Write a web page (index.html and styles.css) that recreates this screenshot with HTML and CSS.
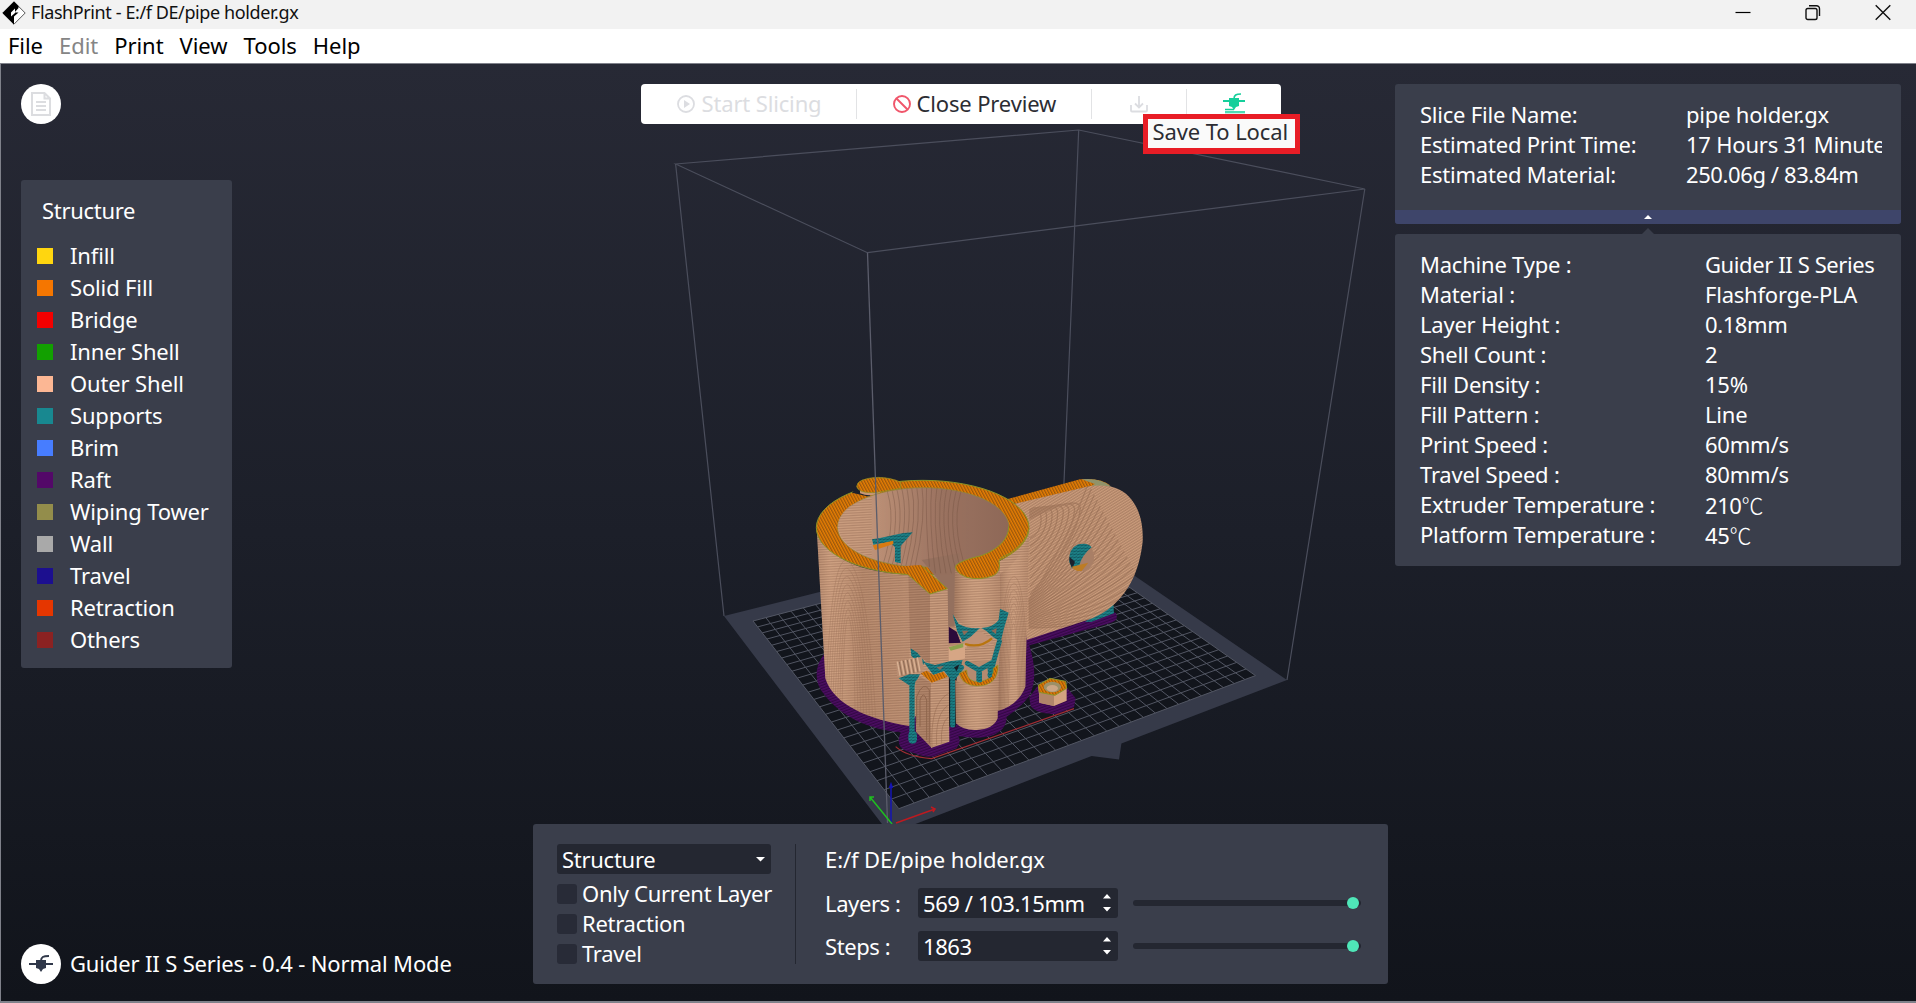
FILE: index.html
```html
<!DOCTYPE html>
<html lang="en">
<head>
<meta charset="utf-8">
<title>FlashPrint - E:/f DE/pipe holder.gx</title>
<link rel="stylesheet" href="styles.css">
</head>
<body>
<header class="titlebar">
  <svg class="logo" width="24" height="24" viewBox="0 0 24 24"><path d="M12 .8 23.2 12 12 23.2.8 12z" fill="#fff" stroke="#555" stroke-width="1"/><path d="M12 .5.5 12 12 23.5V15.5l4.5-4H12.500l4-4.500V5z" fill="#000"/><path d="M9 11.500 13 7.500v4.500l-4 3.500z" fill="#fff"/></svg>
  <span class="title">FlashPrint - E:/f DE/pipe holder.gx</span>
  <div class="controls">
    <svg width="16" height="18" viewBox="0 0 16 18"><path d="M.5 8.500h15" stroke="#000" stroke-width="1.200"/></svg>
    <svg width="16" height="18" viewBox="0 0 16 18" fill="none" stroke="#111" stroke-width="1.400"><rect x="1" y="4.500" width="11" height="11" rx="1.800"/><path d="M4 1.700h7.500a3 3 0 0 1 3 3V12"/></svg>
    <svg width="16" height="18" viewBox="0 0 16 18"><path d="M.7 1.200l14.600 14.600M15.300 1.200.7 15.800" stroke="#111" stroke-width="1.400"/></svg>
  </div>
</header>
<nav class="menubar"><span>File</span><span class="disabled">Edit</span><span>Print</span><span>View</span><span>Tools</span><span>Help</span></nav>

<main class="viewport">
<svg class="scene" viewBox="1 64 1915 937" width="1915" height="937">
  <defs>
    <pattern id="layers" width="6" height="5" patternUnits="userSpaceOnUse" patternTransform="rotate(2)"><rect width="6" height="5" fill="#cc9f80"/><path d="M0 4H6" stroke="#987058" stroke-width="2"/></pattern>
    <pattern id="fan" width="7" height="7" patternUnits="userSpaceOnUse" patternTransform="rotate(-32)"><rect width="7" height="7" fill="#cb9d7d"/><path d="M0 5H7" stroke="#a0765c" stroke-width="2.600"/></pattern>
    <pattern id="diag" width="8" height="8" patternUnits="userSpaceOnUse" patternTransform="rotate(62)"><rect width="8" height="8" fill="#e67e04"/><path d="M0 6H8" stroke="#8e510d" stroke-width="3.200"/></pattern>
    <pattern id="raft" width="8" height="8" patternUnits="userSpaceOnUse" patternTransform="rotate(-20)"><rect width="8" height="8" fill="#4c0d63"/><path d="M0 6H8" stroke="#2d063c" stroke-width="3"/></pattern>
    <pattern id="prop" width="11" height="9" patternUnits="userSpaceOnUse"><rect width="11" height="9" fill="#1c7f85"/><path d="M0 6L11 2" stroke="#0f5059" stroke-width="2.500"/></pattern>
    <linearGradient id="shade" x1="0" x2="1"><stop offset="0" stop-color="#7c5744" stop-opacity=".2"/><stop offset=".15" stop-color="#f0bf9c" stop-opacity=".16"/><stop offset=".5" stop-color="#8c6148" stop-opacity=".25"/><stop offset="1" stop-color="#a77b62" stop-opacity=".3"/></linearGradient>
    <linearGradient id="inside" x1="0" x2="1"><stop offset="0" stop-color="#cfa082"/><stop offset=".3" stop-color="#b58a72"/><stop offset=".6" stop-color="#9b7361"/><stop offset="1" stop-color="#8e6857"/></linearGradient>
    <linearGradient id="tube" x1="0" x2="1"><stop offset="0" stop-color="#6f4a38" stop-opacity=".35"/><stop offset=".5" stop-color="#ffd0a8" stop-opacity=".12"/><stop offset="1" stop-color="#8a6048" stop-opacity=".2"/></linearGradient>
    <clipPath id="armClip"><path id="armShape" d="M690 135L930 78C985 72 1020 82 1045 108C1082 145 1090 200 1088 245C1078 335 1045 395 1000 435Q965 468 915 482L740 540Z"/></clipPath>
    <clipPath id="innerClip"><ellipse cx="430" cy="202" rx="257" ry="119"/><path d="M440 270H530V520H500Z"/></clipPath>
    <clipPath id="bodyClip"><path d="M110 205L136 655C160 735 270 780 388 798V345Q160 320 110 205ZM747 205L736 680Q715 735 655 752V345Q740 290 747 205Z"/></clipPath>
  </defs>

  <!-- build plate -->
  <path d="M724 616L1067 529.600L1287 680L1121.400 743.500L1119 759.600L1091.600 756L889.500 834Z" fill="#363a49"/>
  <path d="M753 621L1062 540L1255.500 675.600L898.800 808.700Z" fill="#12151c"/>
  <g id="grid" stroke="#525663" stroke-width="1"></g>

  <!-- rear edges of the build volume -->
  <g fill="none" stroke="#4b4e5c" stroke-width="1.200">
    <path d="M675.600 164L1078.700 130L1364.800 189L867.500 252.700Z"/>
    <path d="M675.600 164L724 616M1078.700 130L1062 530M1364.800 189L1287 680"/>
  </g>

  <!-- sliced model -->
  <g transform="translate(780 460) scale(.33333)">
    <path d="M135 580C100 620 105 670 130 700C180 770 270 810 362 817C350 850 355 870 400 878Q430 892 460 890L530 865Q545 845 535 828Q600 840 640 825Q680 808 680 770Q725 740 745 712C768 675 768 620 748 556L990 490Q1018 482 1008 460L995 452L735 530L520 490V560Z" fill="url(#raft)"/>
    <path d="M748 712L775 675L860 682L887 715L882 742L830 762Q770 762 752 738Z" fill="url(#raft)"/>
    <path d="M347 860Q380 890 455 896L882 746" fill="none" stroke="#a32d34" stroke-width="3.500"/>

    <path d="M915 485L1000 428L1002 460L935 485Z" fill="url(#prop)"/>
    <path d="M672 120L900 58Q960 52 990 76L925 80L715 134Z" fill="url(#diag)"/>
    <path d="M905 58Q960 52 995 80L930 80L945 72Z" fill="#91936a"/>
    <use href="#armShape" fill="url(#fan)"/>
    <g clip-path="url(#armClip)" fill="none" stroke="#8d644c" stroke-width="4" opacity=".45" id="armGrain"></g>
    <ellipse cx="905" cy="292" rx="37" ry="42" fill="#a97f66"/>
    <path d="M868 305Q865 265 895 253Q925 247 935 262Q905 285 896 322L875 325Z" fill="url(#prop)"/>
    <path d="M868 290L885 305L878 323Q867 312 868 290Z" fill="#1c222b"/><path d="M875 320L925 308L905 333Q885 335 875 320Z" fill="#bd7c24"/>

    <!-- outer wall -->
    <path d="M110 205L136 655C160 735 270 780 388 798L450 700L530 720L655 752Q715 735 736 680L747 205Q700 345 428 345T110 205Z" fill="url(#layers)"/>
    <path d="M110 205L136 655C160 735 270 780 388 798V345Q160 320 110 205Z" fill="url(#shade)"/>
    <path d="M747 205L736 680Q715 735 655 752V345Q740 290 747 205Z" fill="url(#tube)"/>
    <g clip-path="url(#bodyClip)" fill="none" stroke="#966c54" stroke-width="2.500" opacity=".4" id="wallGrain"></g>

    <!-- rim and bore -->
    <path d="M232 78L235 105L275 115V100L350 95V70Z" fill="#c79677"/>
    <ellipse cx="428" cy="203" rx="319" ry="142" fill="url(#diag)" stroke="#8b9427" stroke-width="3"/>
    <path d="M216 98L275 112L240 70Z" fill="#1d202b"/>
    <path d="M240 82L240 100Q270 112 300 98V80Z" fill="#c79677"/>
    <path d="M230 80Q230 55 295 52Q330 52 362 66V85L285 98Q235 100 230 80Z" fill="url(#diag)" stroke="#8b9427" stroke-width="2"/>
    <ellipse cx="430" cy="202" rx="257" ry="119" fill="url(#inside)" stroke="#8b8a3e" stroke-width="2"/>
    <path d="M425 300L540 280L530 345L524 500H500V390Z" fill="#94705e"/>
    <g clip-path="url(#innerClip)" fill="none" stroke="#6f4e3f" stroke-width="2.500" opacity=".45" id="boreGrain"></g>
    <path d="M173 202Q177 135 275 111V290Q185 265 173 202Z" fill="url(#layers)" opacity=".8"/>
    <path d="M276 238L300 234L370 219L398 217L362 258V310L345 306V262L330 246L280 254Z" fill="url(#prop)"/><path d="M278 256L340 242V252L285 270Z" fill="#d87b13"/>

    <!-- clamp tube -->
    <path d="M525 322L523 470Q560 512 600 502Q645 505 660 460V310Z" fill="url(#layers)"/>
    <path d="M525 322L523 470Q560 512 600 502Q645 505 660 460V310Z" fill="url(#tube)"/>
    <path d="M686 200C686 245 640 275 600 288Q545 300 528 316Q520 335 560 352Q600 362 640 347Q664 335 657 302Q660 292 690 280Q742 245 747 205L720 160Z" fill="url(#diag)"/>
    <path d="M686 200C686 245 640 275 600 288Q545 300 528 316Q520 335 560 352Q600 362 640 347Q664 335 657 302Q660 292 690 280Q742 245 747 205" fill="none" stroke="#8b9427" stroke-width="3"/>

    <!-- gap behind the bolt -->
    <path d="M506 500L530 515L545 555H506Z" fill="#2b0a3a"/>
    <path d="M500 550L660 545L655 650L530 700L500 800Z" fill="#b78b6e"/>
    <path d="M506 605L545 610L530 650L528 800H506Z" fill="#171b23"/>

    <!-- flap -->
    <path d="M385 340L450 400V612L390 570Z" fill="url(#layers)"/><path d="M385 340L450 400V612L390 570Z" fill="#7a5240" opacity=".33"/>
    <path d="M450 400L503 386L506 605L450 614Z" fill="url(#layers)"/>
    <path d="M360 326Q395 316 425 317L502 386L450 402L385 345Z" fill="url(#diag)"/>
    <path d="M425 317L502 386L450 402L385 345" fill="none" stroke="#8b9427" stroke-width="3"/>
    <path d="M345 322Q390 316 425 315L395 348Z" fill="url(#diag)"/>

    <!-- bolt -->
    <path d="M506 560L560 550V595L506 607Z" fill="#d6a685"/><path d="M506 562L550 550V562L512 572Z" fill="#8da24d"/>
    <path d="M555 562Q600 570 642 545L640 595Q600 615 555 600Z" fill="url(#layers)"/>
    <path d="M540 545Q570 510 605 515L640 545Q600 568 560 556Z" fill="#c09277"/>
    <path d="M555 552Q600 566 636 535" fill="none" stroke="#b8750f" stroke-width="7"/>
    <path d="M560 615L640 605L645 665H560Z" fill="#b58a70"/>

    <!-- supports -->
    <g fill="url(#prop)">
      <path d="M518 462L536 492Q565 508 600 504L572 530L548 545L532 515Z"/>
      <path d="M604 504Q640 502 656 480L660 446L686 458L672 505L662 545L640 532L618 512Z"/>
      <path d="M430 605L465 615L512 603L548 600L538 628L520 645L492 633L460 645Z"/>
      <path d="M356 655L388 643H420L404 675H386Z"/>
      <path d="M392 565L412 578L434 605L428 618L394 588Z"/>
    </g>
    <path d="M546 512L566 512L552 526ZM634 512L650 504L648 522ZM470 622L492 617L480 630Z" fill="#8d6a56"/>
    <g fill="none" stroke="url(#prop)" stroke-linejoin="round" stroke-linecap="round">
      <path stroke-width="15" d="M658 545L645 590L630 645M562 610L597 630L636 608M597 630V660"/>
      <path stroke-width="15" d="M500 630L518 655L545 622M518 655V795"/>
      <path stroke-width="16" d="M396 665V825"/>
      <path stroke-width="26" d="M398 825V838"/>
    </g>
    <path d="M522 622L538 614L530 634Z" fill="#171b23"/>

    <!-- lower blocks -->
    <path d="M406 665L420 650L453 668V862L408 815Z" fill="url(#layers)"/><path d="M406 665L420 650L453 668V862L408 815Z" fill="#7a5240" opacity=".3"/>
    <path d="M453 666L506 650L508 845L453 864Z" fill="url(#layers)"/>
    <path d="M422 640L440 632L460 645L490 635L503 650L455 668Z" fill="url(#diag)"/>
    <g fill="none" stroke="#8f654d" stroke-width="3"><path d="M410 790V710Q430 660 448 690V850M420 800V720Q430 690 440 720V840"/><path opacity=".45" d="M456 860Q450 730 506 700M470 855Q465 760 506 735M485 850Q480 790 506 770"/></g>
    <path d="M526 660L528 790Q550 812 590 810Q640 808 653 775L655 650Q590 700 526 660Z" fill="url(#layers)"/>
    <path d="M526 660L528 790Q550 812 590 810Q640 808 653 775L655 650Q590 700 526 660Z" fill="url(#tube)"/>
    <path d="M538 640Q545 675 590 678Q655 678 654 615L640 625Q645 655 600 665Q560 668 560 630Z" fill="url(#diag)" stroke="#8b9427" stroke-width="2"/>
    <path d="M590 635H606V665L598 668L590 664ZM622 622H636V650L626 656Z" fill="url(#prop)"/>
    <path d="M348 605L425 590L432 630L352 650Z" fill="#b98d71"/>
    <path d="M352 605l8 42M364 602l8 42M376 600l8 42M388 598l8 42M400 595l8 42M412 592l8 42" stroke="#d9b294" stroke-width="4"/>
    <path d="M358 605l8 42M370 602l8 42M382 600l8 42M394 598l8 42M406 595l8 42" stroke="#8c6a54" stroke-width="3"/>

    <!-- nut -->
    <path d="M776 680L778 728L822 738L860 722V680L820 705Z" fill="#d3a280"/><path d="M776 680L778 728L822 738V705Z" fill="#b0856a"/>
    <path d="M775 675L810 655L857 664L860 685L825 706L778 697Z" fill="url(#diag)" stroke="#8b9427" stroke-width="3"/>
    <ellipse cx="817" cy="681" rx="26" ry="16" fill="#9c9068"/><ellipse cx="817" cy="685" rx="17" ry="10" fill="#cba686"/>
  </g>

  <path d="M867.500 252.700L887.500 823" stroke="#5b5d6b" stroke-width="1.300"/>
  <g fill="none" stroke-width="1.500">
    <path d="M891 824V784M889.500 788L891 784L892.500 788" stroke="#1414b4"/>
    <path d="M892 824L870 797M870 801V797H874" stroke="#1fc01f"/>
    <path d="M896 823L935 809M931 807L935 809L933 812" stroke="#bd1a20"/>
  </g>
</svg>

<div class="hud">
  <section class="left">
    <button class="round"><svg width="20" height="24" viewBox="0 0 20 24" fill="none" stroke="#dcdde0" stroke-width="2"><path d="M1 1h12.500L19 6.500V23H1zM13.500 1v5.500H19M5 10h10M5 14h10M5 18h10"/></svg></button>
    <aside class="panel legend">
      <h2>Structure</h2>
      <ul>
        <li><i class="infill"></i><span>Infill</span></li><li><i class="solid"></i><span>Solid Fill</span></li><li><i class="bridge"></i><span>Bridge</span></li><li><i class="inner"></i><span>Inner Shell</span></li><li><i class="outer"></i><span>Outer Shell</span></li><li><i class="supports"></i><span>Supports</span></li><li><i class="brim"></i><span>Brim</span></li><li><i class="raft"></i><span>Raft</span></li><li><i class="tower"></i><span>Wiping Tower</span></li><li><i class="wall"></i><span>Wall</span></li><li><i class="travel"></i><span>Travel</span></li><li><i class="retraction"></i><span>Retraction</span></li><li><i class="others"></i><span>Others</span></li>
      </ul>
    </aside>
    <footer class="machine">
      <span class="round"><svg width="24" height="20" viewBox="0 0 24 20"><path d="M0 9h24v2H0z" fill="#30384a"/><path d="M7 6h10v8l-3 1-2 3-2-3-3-1z" fill="#30384a"/><path d="M12 7c0-4 2-5 8-5" fill="none" stroke="#30384a" stroke-width="2"/></svg></span>
      <span class="label">Guider II S Series - 0.4 - Normal Mode</span>
    </footer>
  </section>

  <section class="center">
    <div class="toolbar">
      <div class="tool start"><svg width="18" height="18" viewBox="0 0 18 18"><circle cx="9" cy="9" r="8" fill="none" stroke="#dcdde1" stroke-width="1.800"/><path d="M7 5l6 4-6 4z" fill="#dcdde1"/></svg><span>Start Slicing</span></div>
      <div class="tool close"><svg width="18" height="18" viewBox="0 0 18 18" fill="none" stroke="#f0566b" stroke-width="1.900"><circle cx="9" cy="9" r="8"/><path d="M3.500 3.500l11 11"/></svg><span>Close Preview</span></div>
      <div class="tool save"><svg width="18" height="18" viewBox="0 0 18 18" fill="none" stroke="#dcdde1" stroke-width="1.800"><path d="M1 10v5.500Q1 16.500 2 16.500h14q1 0 1-1V10M9 1v11M5 8.500l4 4 4-4"/></svg></div>
      <div class="tool print"><svg width="22" height="22" viewBox="0 0 22 22"><path d="M0 7h22v2H0z" fill="#15cf9b"/><path d="M6 5h10v8l-3 1-2 3-2-3-3-1z" fill="#15cf9b"/><path d="M11 6c0-4 2-5 7-5M2 16.500h9M2 19h20M2 21.500h20" fill="none" stroke="#15cf9b" stroke-width="1.600"/></svg></div>
      <div class="tooltip">Save To Local</div>
    </div>
    <div class="panel preview">
      <div class="options">
        <div class="select"><span>Structure</span><svg width="9" height="5" viewBox="0 0 9 5"><path d="M0 0h9L4.500 4.500z" fill="#fff"/></svg></div>
        <label><i></i><span>Only Current Layer</span></label><label><i></i><span>Retraction</span></label><label><i></i><span>Travel</span></label>
      </div>
      <div class="playback">
        <p class="path">E:/f DE/pipe holder.gx</p>
        <div class="row"><span class="name">Layers :</span><div class="spin"><span>569 / 103.15mm</span><svg width="8" height="18" viewBox="0 0 8 18"><path d="M0 4.500L4 0l4 4.500zM0 13l4 4.500L8 13z" fill="#fff"/></svg></div><div class="slider"><b></b></div></div>
        <div class="row"><span class="name">Steps :</span><div class="spin"><span>1863</span><svg width="8" height="18" viewBox="0 0 8 18"><path d="M0 4.500L4 0l4 4.500zM0 13l4 4.500L8 13z" fill="#fff"/></svg></div><div class="slider"><b></b></div></div>
      </div>
    </div>
  </section>

  <section class="right">
    <div class="panel summary">
      <dl><dt>Slice File Name:</dt><dd>pipe holder.gx</dd><dt>Estimated Print Time:</dt><dd>17 Hours 31 Minutes</dd><dt>Estimated Material:</dt><dd class="num">250.06g / 83.84m</dd></dl>
      <div class="fold"><svg width="8" height="4" viewBox="0 0 8 4"><path d="M0 4l4-4 4 4z" fill="#fff"/></svg></div>
    </div>
    <svg class="pointer" width="12" height="6" viewBox="0 0 12 6"><path d="M0 6l6-6 6 6z" fill="#3a3e4b"/></svg>
    <div class="panel details">
      <dl><dt>Machine Type :</dt><dd class="num">Guider II S Series</dd><dt>Material :</dt><dd>Flashforge-PLA</dd><dt>Layer Height :</dt><dd class="num">0.18mm</dd><dt>Shell Count :</dt><dd>2</dd><dt>Fill Density :</dt><dd>15%</dd><dt>Fill Pattern :</dt><dd>Line</dd><dt>Print Speed :</dt><dd>60mm/s</dd><dt>Travel Speed :</dt><dd>80mm/s</dd><dt>Extruder Temperature :</dt><dd class="num">210<span class="unit">℃</span></dd><dt>Platform Temperature :</dt><dd class="num">45<span class="unit">℃</span></dd></dl>
    </div>
  </section>
</div>
</main>
<script src="scene.js"></script>
</body>
</html>
```
FILE: styles.css
```css
* { box-sizing: border-box; margin: 0; padding: 0; }
body { width: 1916px; height: 1003px; overflow: hidden; display: flex; flex-direction: column; font: 22px/30px "Noto Sans", "Noto Sans CJK SC", sans-serif; letter-spacing: -.15px; color: #fff; background: #fff; white-space: nowrap; }
svg { display: block; flex: none; }

.titlebar { height: 29px; display: flex; align-items: center; background: #f2f2f2; color: #111; padding: 0 25px 4px 2px; }
.title { font-size: 18px; line-height: 24px; margin: -2px 0 0 5px; letter-spacing: -.4px; }
.controls { margin-left: auto; display: flex; gap: 54px; }
.menubar { height: 34px; display: flex; gap: 16px; padding: 0 8px; line-height: 32px; letter-spacing: -.05px; color: #000; }
.menubar .disabled { color: #858585; }

.viewport { position: relative; height: 940px; border: solid #7f818a; border-width: 1px 0 2px 1px; background: linear-gradient(#272935, #1c1f29 50%, #11141b); }
.scene { position: absolute; inset: 0; }
.hud { position: relative; height: 100%; display: grid; grid-template-columns: 512px 855px 513px; padding: 20px 15px 17px 20px; }
.left, .center { display: flex; flex-direction: column; }
.right { margin-left: 7px; width: 506px; }
.panel { background: #3a3e4b; border-radius: 3px; }

.round { width: 40px; height: 40px; border: 0; border-radius: 50%; background: #fff; display: flex; align-items: center; justify-content: center; }
.legend { width: 211px; height: 488px; margin-top: 56px; padding: 15px 0 0 16px; }
.legend h2 { font-size: 22px; font-weight: 400; margin-left: 5px; letter-spacing: -.3px; }
.legend ul { list-style: none; margin-top: 15px; }
.legend li { height: 32px; display: flex; align-items: center; gap: 17px; }
.legend span, .machine .label, .tool span, .options span { margin-top: -2px; }
.legend i { width: 16px; height: 16px; }
.infill { background: #ffd60f; }
.solid { background: #f57600; }
.bridge { background: #f40000; }
.inner { background: #12a000; }
.outer { background: #fcb794; }
.supports { background: #188890; }
.brim { background: #477dff; }
.raft { background: #530868; }
.tower { background: #938d4b; }
.wall { background: #a9a9a9; }
.travel { background: #1c0f8f; }
.retraction { background: #e53600; }
.others { background: #8b2222; }
.machine { margin-top: auto; display: flex; align-items: center; gap: 9px; }

.toolbar { position: relative; align-self: center; width: 640px; height: 40px; display: grid; grid-template-columns: 216px 235px 95px 94px; align-items: center; background: #fff; border-radius: 4px; color: #2c2d33; }
.tool { height: 30px; display: flex; align-items: center; border-right: 1px solid #e2e3e5; }
.tool span { margin-left: 7px; letter-spacing: -.15px; }
.start { color: #dcdde1; padding-left: 36px; }
.close { padding-left: 36px; }
.close span { margin-left: 6px; }
.save { padding-left: 38px; }
.print { border: 0; padding-left: 36px; }
.tooltip { position: absolute; left: 502px; top: 30px; width: 157px; height: 40px; border: 5px solid #e81d26; border-bottom-width: 6px; background: #fafafa; padding-left: 5px; line-height: 25px; letter-spacing: -.1px; }

.preview { margin-top: auto; height: 160px; padding: 20px 24px; display: flex; }
.options { width: 239px; border-right: 1px solid #242731; display: flex; flex-direction: column; gap: 10px; letter-spacing: -.27px; }
.select { width: 214px; height: 30px; padding: 0 6px 0 5px; background: #242731; border-radius: 3px; display: flex; align-items: center; justify-content: space-between; }
.select span { margin-top: 0; }
.options label { height: 20px; line-height: 20px; display: flex; align-items: center; gap: 5px; }
.options i { width: 20px; height: 20px; border-radius: 3px; background: #282b37; }
.playback { padding-left: 29px; flex: 1; display: flex; flex-direction: column; }
.path { height: 30px; margin: 0 0 14px; letter-spacing: -.1px; }
.row { height: 30px; margin-bottom: 13px; display: flex; align-items: center; }
.name { width: 93px; letter-spacing: -.4px; }
.spin { width: 200px; height: 30px; padding: 0 7px 0 5px; background: #242731; border-radius: 3px; display: flex; align-items: center; justify-content: space-between; letter-spacing: -.4px; }
.slider { width: 228px; height: 6px; margin-left: 15px; border-radius: 3px; background: #242731; display: flex; align-items: center; justify-content: flex-end; }
.slider b { width: 12px; height: 12px; border-radius: 50%; background: #4fe6b8; margin-right: 2px; }

dl { display: grid; grid-auto-rows: 30px; letter-spacing: -.22px; }
.num { letter-spacing: -.4px; }
.summary { height: 140px; overflow: hidden; display: flex; flex-direction: column; }
.summary dl { grid-template-columns: 266px 196px; padding: 15px 0 0 25px; }
.summary dd { overflow: hidden; }
.fold { height: 14px; margin-top: auto; background: #3e456a; display: flex; align-items: center; justify-content: center; }
.pointer { margin: 4px auto 0; }
.details { height: 332px; padding: 15px 0 0 25px; }
.details dl { grid-template-columns: 285px 190px; }
.unit { font-family: "Noto Sans CJK SC", sans-serif; font-weight: 300; }
```
FILE: scene.js
```js
const NS = "http://www.w3.org/2000/svg";
const add = (id, d) => {
  const p = document.createElementNS(NS, "path");
  p.setAttribute("d", d);
  document.getElementById(id).appendChild(p);
};

// Projective map of the unit square onto the printable area of the plate.
const [p0, p1, p2, p3] = [[898.8, 808.7], [1255.5, 675.6], [1062, 540], [753, 621]];
const dx1 = p1[0] - p2[0], dx2 = p3[0] - p2[0], sx = p0[0] - p1[0] + p2[0] - p3[0];
const dy1 = p1[1] - p2[1], dy2 = p3[1] - p2[1], sy = p0[1] - p1[1] + p2[1] - p3[1];
const den = dx1 * dy2 - dx2 * dy1;
const g = (sx * dy2 - dx2 * sy) / den, h = (dx1 * sy - sx * dy1) / den;
const project = (u, v) => {
  const w = g * u + h * v + 1;
  const x = ((p1[0] - p0[0] + g * p1[0]) * u + (p3[0] - p0[0] + h * p3[0]) * v + p0[0]) / w;
  const y = ((p1[1] - p0[1] + g * p1[1]) * u + (p3[1] - p0[1] + h * p3[1]) * v + p0[1]) / w;
  return x.toFixed(1) + " " + y.toFixed(1);
};
for (let i = 0; i <= 28; i++) add("grid", `M${project(i / 28, 0)}L${project(i / 28, 1)}`);
for (let i = 0; i <= 25; i++) add("grid", `M${project(0, i / 25)}L${project(1, i / 25)}`);

// Layer grain: a fan spreading over the arm, contour loops on the wall and in the bore.
for (let i = 0; i < 8; i++) add("armGrain", `M748 ${150 + i * 4}Q${775 + i * 17} ${130 - i * 4} ${782 + i * 17} ${165 - i * 3}Q${790 + i * 15} ${215 + i * 3} 750 ${235 + i * 24}`);
for (let i = 0; i < 22; i++) add("armGrain", `M746 ${420 + i * 4}Q${850 + i * 6} ${270 + i * 11} ${925 + i * 9} ${70 + i * 17}`);
for (let i = 0; i < 8; i++) {
  add("wallGrain", `M${185 - i * 7} 800Q${190 - i * 6} ${480 - i * 30} 205 ${470 - i * 24}Q${225 + i * 6} ${500 - i * 20} ${225 + i * 9} 800`);
  add("wallGrain", `M${685 - i * 4} 750Q${690 - i * 4} ${500 - i * 20} 700 ${490 - i * 20}T${715 + i * 4} 720`);
  add("boreGrain", `M${425 - i * 16} 70Q${440 - i * 12} 170 ${405 - i * 14} 320M${440 + i * 16} 70Q${435 + i * 10} 180 ${450 + i * 16} 340`);
}
```
